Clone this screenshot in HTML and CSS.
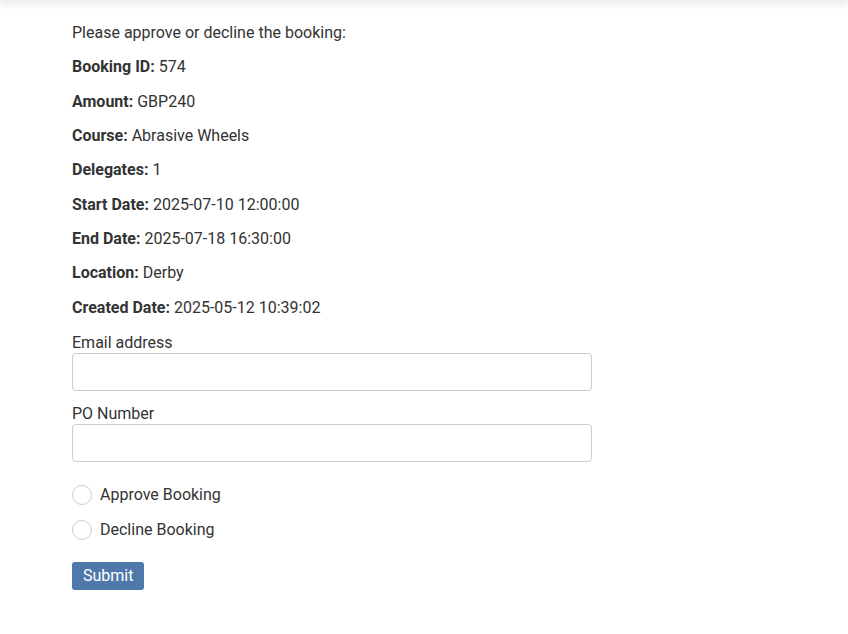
FILE: index.html
```html
<!DOCTYPE html>
<html lang="en">
<head>
    <meta charset="UTF-8">
    <meta name="viewport" content="width=device-width, initial-scale=1.0">
    <title>Booking Approval</title>
    <link rel="stylesheet" href="styles.css">
</head>
<body>
    <div class="topbar"></div>
    <div class="container">
        <p>Please approve or decline the booking:</p>
        <p><strong>Booking ID:</strong> 574</p>
        <p><strong>Amount:</strong> GBP240</p>
        <p><strong>Course:</strong> Abrasive Wheels</p>
        <p><strong>Delegates:</strong> 1</p>
        <p><strong>Start Date:</strong> 2025-07-10 12:00:00</p>
        <p><strong>End Date:</strong> 2025-07-18 16:30:00</p>
        <p><strong>Location:</strong> Derby</p>
        <p><strong>Created Date:</strong> 2025-05-12 10:39:02</p>

        <form class="approve-form">
            <div class="field">
                <label for="email">Email address</label>
                <input type="email" id="email">
            </div>
            <div class="field">
                <label for="po">PO Number</label>
                <input type="text" id="po">
            </div>
            <div class="choices">
                <label class="radio"><input type="radio" name="decision" value="approve"><span>Approve Booking</span></label>
                <label class="radio"><input type="radio" name="decision" value="decline"><span>Decline Booking</span></label>
            </div>
            <button type="submit">Submit</button>
        </form>
    </div>
</body>
</html>
```

FILE: styles.css
```css
body {
    font-family: Roboto, "Liberation Sans", sans-serif;
    font-size: 16px;
    margin: 0;
    padding: 0;
    color: #333;
    background: #fff;
}
.topbar {
    height: 0;
    box-shadow: 0 0 8px 2px rgba(0, 0, 0, 0.18);
}
.container {
    padding: 22px 72px 0;
}
p {
    margin: 0 0 12.33px;
    line-height: 22px;
}
strong {
    font-weight: 700;
}
.approve-form {
    padding-top: 2px;
}
.field {
    margin-bottom: 13px;
}
.field label {
    display: block;
    line-height: 20px;
}
.field input {
    display: block;
    box-sizing: border-box;
    width: 520px;
    height: 38px;
    border: 1px solid #ccc;
    border-radius: 4px;
    padding: 6px 12px;
    font: inherit;
}
.choices {
    margin-top: 23px;
}
.radio {
    display: flex;
    align-items: center;
    height: 20px;
    margin-bottom: 15px;
}
.radio input {
    appearance: none;
    width: 20px;
    height: 20px;
    margin: 0 8px 0 0;
    border: 1px solid #ccc;
    border-radius: 50%;
    background: #fff;
}
.radio input:checked {
    border: 6px solid #5079ab;
}
button {
    display: block;
    margin-top: 22px;
    padding: 0 11px;
    height: 28px;
    border: none;
    border-radius: 3px;
    background: #5079ab;
    color: #fff;
    font: inherit;
    cursor: pointer;
}
button:hover {
    background: #3f6593;
}
```
